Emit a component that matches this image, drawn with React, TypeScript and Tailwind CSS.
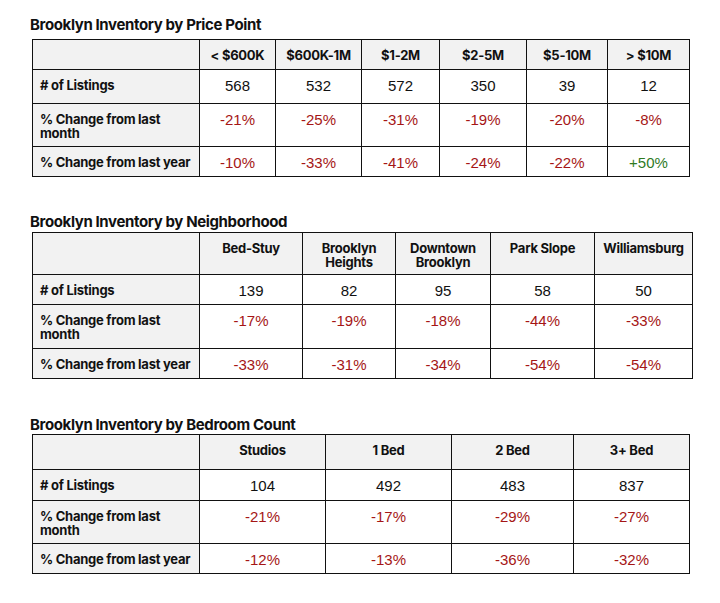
const RED = "text-[#a51616]";
const GREEN = "text-[#2f7a1f]";

type Row = { label: string; values: string[]; colored?: boolean };

type TableDef = {
  title: string;
  gridClass: string;
  headers: string[];
  rows: Row[];
};

const tables: TableDef[] = [
  {
    title: "Brooklyn Inventory by Price Point",
    gridClass: "grid-cols-[167px_76px_86px_78px_87px_81px_82px] grid-rows-[30px_34px_43px_30px]",
    headers: ["< $600K", "$600K-1M", "$1-2M", "$2-5M", "$5-10M", "> $10M"],
    rows: [
      { label: "# of Listings", values: ["568", "532", "572", "350", "39", "12"] },
      { label: "% Change from last\nmonth", values: ["-21%", "-25%", "-31%", "-19%", "-20%", "-8%"], colored: true },
      { label: "% Change from last year", values: ["-10%", "-33%", "-41%", "-24%", "-22%", "+50%"], colored: true },
    ],
  },
  {
    title: "Brooklyn Inventory by Neighborhood",
    gridClass: "grid-cols-[167px_103px_93px_95px_104px_98px] grid-rows-[42px_30px_44px_30px]",
    headers: ["Bed-Stuy", "Brooklyn\nHeights", "Downtown\nBrooklyn", "Park Slope", "Williamsburg"],
    rows: [
      { label: "# of Listings", values: ["139", "82", "95", "58", "50"] },
      { label: "% Change from last\nmonth", values: ["-17%", "-19%", "-18%", "-44%", "-33%"], colored: true },
      { label: "% Change from last year", values: ["-33%", "-31%", "-34%", "-54%", "-54%"], colored: true },
    ],
  },
  {
    title: "Brooklyn Inventory by Bedroom Count",
    gridClass: "grid-cols-[167px_126px_126px_122px_116px] grid-rows-[35px_31px_43px_30px]",
    headers: ["Studios", "1 Bed", "2 Bed", "3+ Bed"],
    rows: [
      { label: "# of Listings", values: ["104", "492", "483", "837"] },
      { label: "% Change from last\nmonth", values: ["-21%", "-17%", "-29%", "-27%"], colored: true },
      { label: "% Change from last year", values: ["-12%", "-13%", "-36%", "-32%"], colored: true },
    ],
  },
];

const bold = "font-['Inter',sans-serif] font-bold text-[13px] leading-[14px] tracking-[-0.02em] text-[#111]";
const value = "font-['Liberation_Sans',Arial,sans-serif] text-[15px] leading-[14px]";

function InventoryTable({ def }: { def: TableDef }) {
  return (
    <div className={`ml-[2px] grid w-fit border-r border-b border-[#111] ${def.gridClass}`}>
      {/* header row */}
      <div className="border-l border-t border-[#111] bg-[#f2f2f2]" />
      {def.headers.map((h) => (
        <div
          key={h}
          className={`border-l border-t border-[#111] bg-[#f2f2f2] px-1 pt-[8px] text-center whitespace-pre-line ${bold}`}
        >
          {h}
        </div>
      ))}

      {def.rows.map((row) => (
        <>
          <div
            key={row.label}
            className={`border-l border-t border-[#111] bg-[#f2f2f2] pl-[7px] pt-[8px] whitespace-pre-line ${bold}`}
          >
            {row.label}
          </div>
          {row.values.map((v, i) => (
            <div
              key={row.label + i}
              className={`border-l border-t border-[#111] bg-white pt-[9px] text-center ${value} ${
                row.colored ? (v.startsWith("+") ? GREEN : RED) : "text-[#111]"
              }`}
            >
              {v}
            </div>
          ))}
        </>
      ))}
    </div>
  );
}

const titleCls = "font-['Inter',sans-serif] font-bold text-[15px] leading-[18px] tracking-[-0.025em] text-[#111]";

export default function App() {
  return (
    <div className="min-h-[603px] w-[720px] bg-white pl-[30px] pt-[16px]">
      <h2 className={titleCls}>{tables[0].title}</h2>
      <div className="mt-[5px]">
        <InventoryTable def={tables[0]} />
      </div>

      <h2 className={`mt-[36px] ${titleCls}`}>{tables[1].title}</h2>
      <div className="mt-[1px]">
        <InventoryTable def={tables[1]} />
      </div>

      <h2 className={`mt-[37px] ${titleCls}`}>{tables[2].title}</h2>
      <div>
        <InventoryTable def={tables[2]} />
      </div>
    </div>
  );
}
